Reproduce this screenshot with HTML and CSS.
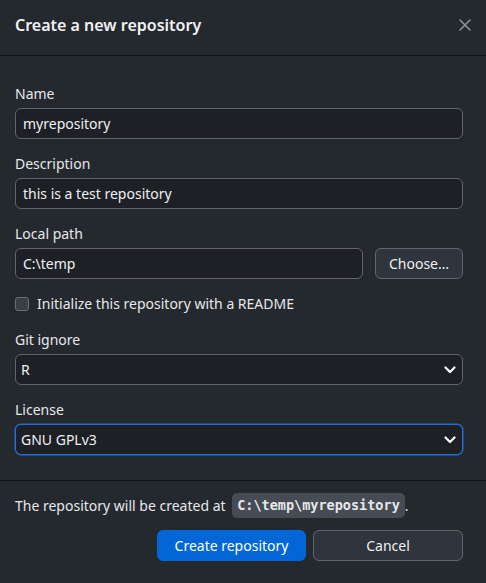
FILE: index.html
```html
<!DOCTYPE html>
<html lang="en">
<head>
<meta charset="utf-8">
<title>Create a new repository</title>
<link rel="stylesheet" href="styles.css">
</head>
<body>
<div class="dialog">
  <header class="dialog-header">
    <h1 class="dialog-title">Create a new repository</h1>
    <button class="close-btn" aria-label="Close">
      <svg width="12" height="12" viewBox="0 0 12 12"><path d="M1 1 L11 11 M11 1 L1 11" stroke="currentColor" stroke-width="1.6" stroke-linecap="round" fill="none"/></svg>
    </button>
  </header>
  <div class="dialog-body">
    <div class="field">
      <label class="field-label">Name</label>
      <div class="text-box">myrepository</div>
    </div>
    <div class="field">
      <label class="field-label">Description</label>
      <div class="text-box">this is a test repository</div>
    </div>
    <div class="field">
      <label class="field-label">Local path</label>
      <div class="path-row">
        <div class="text-box grow">C:\temp</div>
        <button class="btn btn-secondary choose-btn">Choose…</button>
      </div>
    </div>
    <div class="checkbox-row">
      <span class="checkbox"></span>
      <span class="checkbox-label">Initialize this repository with a README</span>
    </div>
    <div class="field">
      <label class="field-label">Git ignore</label>
      <div class="select-box">
        <span class="select-value">R</span>
        <svg class="chevron" width="12" height="8" viewBox="0 0 12 8"><path d="M1.5 1.5 L6 6 L10.5 1.5" stroke="currentColor" stroke-width="2.2" stroke-linecap="round" stroke-linejoin="round" fill="none"/></svg>
      </div>
    </div>
    <div class="field last">
      <label class="field-label">License</label>
      <div class="select-box focused">
        <span class="select-value">GNU GPLv3</span>
        <svg class="chevron" width="12" height="8" viewBox="0 0 12 8"><path d="M1.5 1.5 L6 6 L10.5 1.5" stroke="currentColor" stroke-width="2.2" stroke-linecap="round" stroke-linejoin="round" fill="none"/></svg>
      </div>
    </div>
  </div>
  <footer class="dialog-footer">
    <p class="footer-note">The repository will be created at <code class="path-code">C:\temp\myrepository</code>.</p>
    <div class="button-row">
      <button class="btn btn-primary">Create repository</button>
      <button class="btn btn-secondary">Cancel</button>
    </div>
  </footer>
</div>
</body>
</html>
```
FILE: styles.css
```css
* { box-sizing: border-box; }
html, body { margin: 0; padding: 0; }
body {
  background: #24292e;
  color: #e6e8ea;
  font-family: "Noto Sans", sans-serif;
  font-size: 14px;
  line-height: 19px;
}
.dialog {
  width: 486px;
  height: 583px;
  background: #24292e;
  display: flex;
  flex-direction: column;
}
.dialog-header {
  height: 56px;
  padding: 0 15px 5px 15px;
  display: flex;
  align-items: center;
  justify-content: space-between;
  border-bottom: 1px solid #131517;
}
.dialog-title {
  margin: 0;
  font-size: 16px;
  font-weight: 600;
  color: #f0f2f4;
}
.close-btn {
  background: none;
  border: none;
  padding: 0;
  width: 12px;
  height: 12px;
  color: #8c939b;
  display: flex;
}
.dialog-body {
  padding: 28px 23px 25px 15px;
  display: flex;
  flex-direction: column;
}
.field {
  display: flex;
  flex-direction: column;
  gap: 5px;
  margin-bottom: 15px;
}
.field.last { margin-bottom: 0; }
.field-label {
  color: #e6e8ea;
}
.text-box, .select-box {
  height: 31px;
  border: 1px solid #5f666e;
  border-radius: 6px;
  background: #1d2024;
  padding: 0 7px;
  display: flex;
  align-items: center;
  color: #eef0f2;
}
.path-row {
  display: flex;
  gap: 12px;
}
.grow { flex: 1; }
.btn {
  height: 31px;
  border-radius: 6px;
  font-family: inherit;
  font-size: 14px;
  color: #eef0f2;
  cursor: pointer;
}
.btn-secondary {
  background: #2f353c;
  border: 1px solid #5f666e;
}
.btn-primary {
  background: #0366d6;
  border: 1px solid #0366d6;
  color: #ffffff;
}
.choose-btn {
  width: 88px;
  padding: 0;
}
.checkbox-row {
  display: flex;
  align-items: center;
  gap: 8px;
  margin: 0 0 17px 0;
  height: 19px;
}
.checkbox {
  width: 14px;
  height: 14px;
  border: 1px solid #6a7078;
  border-radius: 3px;
  background: #3b3f44;
}
.select-box {
  justify-content: space-between;
  padding: 0 6px 0 5px;
}
.select-box.focused {
  border-color: #1f6fd6;
  box-shadow: 0 0 0 0.5px #1f6fd6;
}
.chevron { color: #ffffff; }
.dialog-footer {
  border-top: 1px solid #131517;
  padding: 12px 23px 0 15px;
  display: flex;
  flex-direction: column;
  gap: 12px;
}
.footer-note {
  margin: 0;
  height: 25px;
  display: flex;
  align-items: center;
  white-space: pre;
}
.path-code {
  font-family: "DejaVu Sans Mono", monospace;
  font-size: 13.5px;
  font-weight: 600;
  background: #454c54;
  border-radius: 5px;
  padding: 3px 5px;
  line-height: 19px;
  margin-left: 3px;
}
.button-row {
  display: flex;
  justify-content: flex-end;
  gap: 7px;
}
.button-row .btn {
  width: 150px;
}
.button-row .btn-primary { width: 149px; }
```
